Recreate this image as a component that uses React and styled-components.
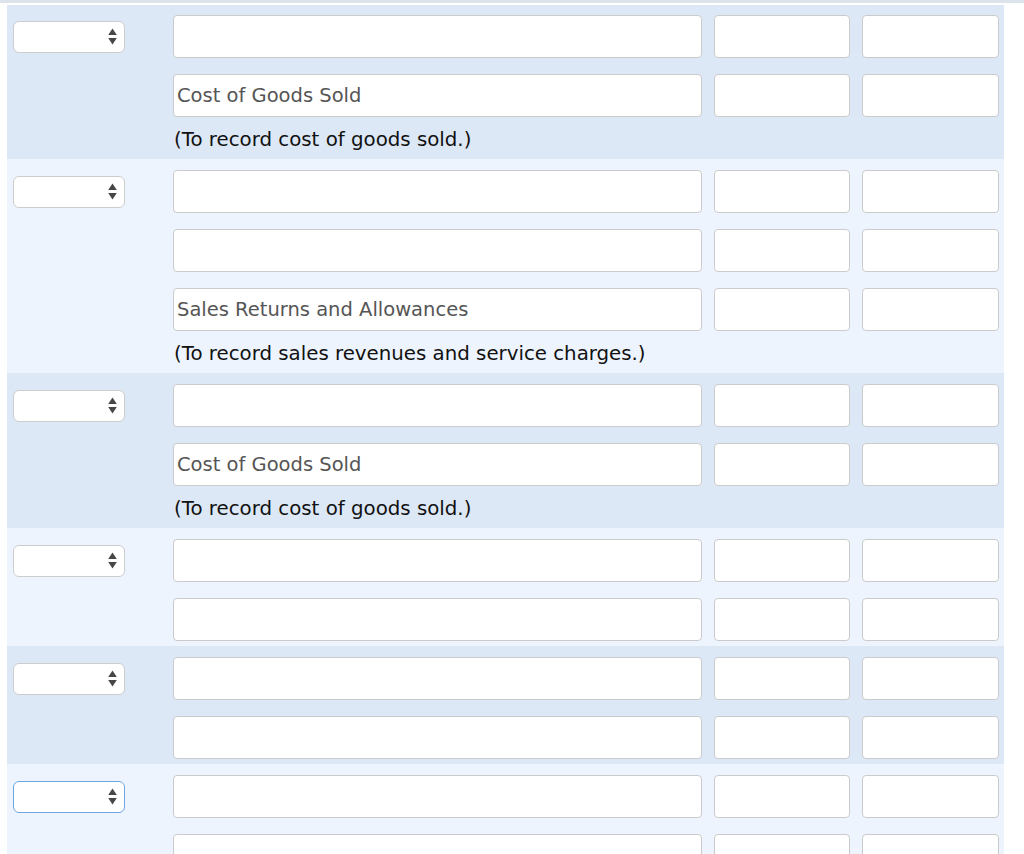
import React from 'react'
import styled, { createGlobalStyle } from 'styled-components'

const Global = createGlobalStyle`
  body {
    margin: 0;
    background: #fff;
    font-family: "DejaVu Sans", Verdana, sans-serif;
  }
`

const groups = [
  { lines: ['', 'Cost of Goods Sold'], memo: '(To record cost of goods sold.)' },
  { lines: ['', '', 'Sales Returns and Allowances'], memo: '(To record sales revenues and service charges.)' },
  { lines: ['', 'Cost of Goods Sold'], memo: '(To record cost of goods sold.)' },
  { lines: ['', ''] },
  { lines: ['', ''] },
  { lines: ['', ''], focused: true },
]

const Page = styled.div`
  border-top: 3px solid #dde3eb;
  padding: 2px 20px 0 7px;
`

const Group = styled.div`
  background: ${p => (p.dark ? '#dde8f6' : '#edf4fe')};
  padding: 11px 5px 5px 6px;
  &:first-child { padding-top: 10px; }
`

const Lines = styled.div`
  display: flex;
  flex-direction: column;
  gap: 16px;
`

const Line = styled.div`
  display: flex;
  align-items: center;
  height: 43px;
`

const SelectCell = styled.div`
  width: 160px;
  flex-shrink: 0;
`

const Select = styled.div`
  box-sizing: border-box;
  width: 112px;
  height: 32px;
  background: #fff;
  border: 1px solid ${p => (p.focused ? '#6ea6e3' : '#cdcdcd')};
  border-radius: 6px;
  display: flex;
  align-items: center;
  justify-content: flex-end;
  padding-right: 7px;
`

const Input = styled.div`
  box-sizing: border-box;
  width: ${p => p.w}px;
  height: 43px;
  margin-right: 12px;
  background: #fff;
  border: 1px solid #cbcbcb;
  border-radius: 4px;
  padding-left: 3px;
  display: flex;
  align-items: center;
  font-size: 19.5px;
  color: #555;
  white-space: nowrap;
  &:last-child { margin-right: 0; }
`

const Memo = styled.div`
  padding: 13px 0 4px 161px;
  font-size: 19.8px;
  line-height: 20px;
  color: #111;
  white-space: nowrap;
`

const Arrows = () => (
  <svg width="9" height="17" viewBox="0 0 9 17">
    <path d="M4.5 0.5 L8.8 7 H0.2 Z" fill="#474747" />
    <path d="M4.5 16.5 L8.8 10 H0.2 Z" fill="#474747" />
  </svg>
)

export default function App () {
  return (
    <Page>
      <Global />
      {groups.map((g, i) => (
        <Group key={i} dark={i % 2 === 0}>
          <Lines>
            {g.lines.map((text, j) => (
              <Line key={j}>
                <SelectCell>
                  {j === 0 && <Select focused={g.focused}><Arrows /></Select>}
                </SelectCell>
                <Input w={529}>{text}</Input>
                <Input w={136} />
                <Input w={137} />
              </Line>
            ))}
          </Lines>
          {g.memo && <Memo>{g.memo}</Memo>}
        </Group>
      ))}
    </Page>
  )
}
